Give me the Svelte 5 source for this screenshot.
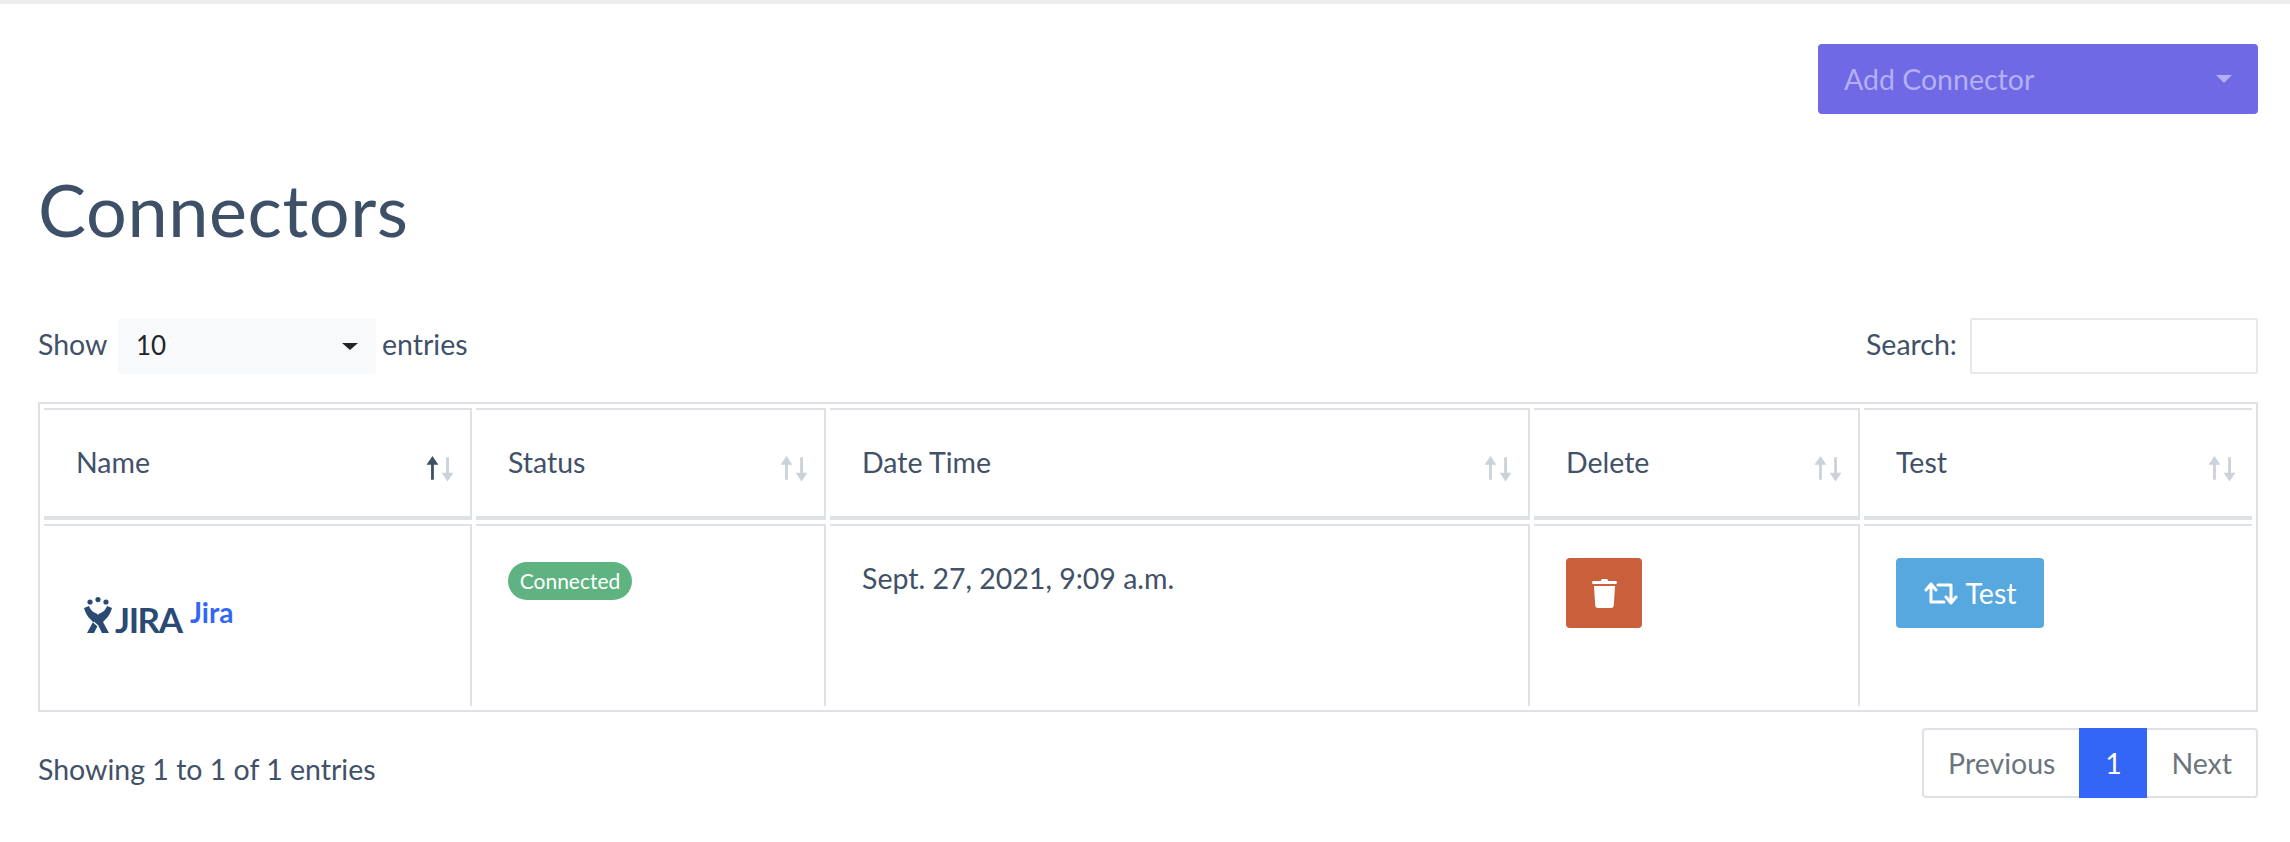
<script>
    const columns = [
        { label: "Name", width: 428 },
        { label: "Status", width: 350 },
        { label: "Date Time", width: 700 },
        { label: "Delete", width: 326 },
        { label: "Test", width: 388 },
    ];
</script>

<div class="page">
    <div class="toolbar">
        <button class="add-btn">
            <span>Add Connector</span>
            <i class="add-caret"></i>
        </button>
    </div>

    <h1>Connectors</h1>

    <div class="filters">
        <label class="length">
            <span class="label-text show">Show</span>
            <span class="select-wrap">
                <select>
                    <option>10</option>
                    <option>25</option>
                    <option>50</option>
                </select>
                <i class="select-caret"></i>
            </span>
            <span class="label-text">entries</span>
        </label>
        <label class="search">
            <span class="label-text">Search:</span>
            <input type="search" />
        </label>
    </div>

    <div class="table-box">
        <table>
            <colgroup>
                {#each columns as col}
                    <col style="width: {col.width}px" />
                {/each}
            </colgroup>
            <thead>
                <tr>
                    {#each columns as col, i}
                        <th>
                            {col.label}
                            <svg class="sort" viewBox="0 0 26 24" width="28" height="26">
                                <path class={i === 0 ? "on" : "off"} d="M6 0 L11.5 8 H7.3 V22 H4.7 V8 H0.5 Z" />
                                <path class="off" d="M20 23.5 L14.5 15.5 H18.7 V1 H21.3 V15.5 H25.5 Z" />
                            </svg>
                        </th>
                    {/each}
                </tr>
            </thead>
            <tbody>
                <tr>
                    <td class="logo-cell">
                        <div class="logo">
                            <svg viewBox="0 0 28 38" width="28" height="38">
                                <g fill="#2b4a73">
                                    <circle cx="6" cy="5" r="2.6" />
                                    <circle cx="14" cy="2.6" r="2.6" />
                                    <circle cx="22" cy="5" r="2.6" />
                                    <path d="M0 11 L5 9 C7 14 10 16 14 17 C18 16 21 14 23 9 L28 11 C26 18 23 21 19 25 L25 36 H18 L14 28 L10 36 H3 L9 25 C5 21 2 18 0 11 Z" />
                                </g>
                                <path d="M10 12 H18 L14 18 Z" fill="#fff" />
                                <path d="M9.5 25 L14 29" stroke="#fff" stroke-width="1.4" />
                            </svg>
                            <span class="jira-mark">JIRA</span>
                            <span class="logo-name">Jira</span>
                        </div>
                    </td>
                    <td><span class="badge">Connected</span></td>
                    <td>Sept. 27, 2021, 9:09 a.m.</td>
                    <td>
                        <button class="btn delete" aria-label="Delete">
                            <svg viewBox="0 0 25 29" width="25" height="29">
                                <path fill="#fff" d="M9 1.5 C9 .6 9.7 0 10.5 0 H14.5 C15.3 0 16 .6 16 1.5 V2 H23.5 C24.4 2 25 2.7 25 3.5 C25 4.3 24.4 5 23.5 5 H1.5 C.6 5 0 4.3 0 3.5 C0 2.7 .6 2 1.5 2 H9 Z M2 7 H23 L21.8 26.6 C21.7 28 20.6 29 19.2 29 H5.8 C4.4 29 3.3 28 3.2 26.6 Z" />
                            </svg>
                        </button>
                    </td>
                    <td>
                        <button class="btn test">
                            <svg viewBox="0 0 34 23" width="34" height="23" fill="none" stroke="#fff" stroke-width="3" stroke-linejoin="round" stroke-linecap="round">
                                <path d="M2 8 L7 2 L12 8 M7 2 V20 H20" />
                                <path d="M14 3 H27 V21 M22 15 L27 21 L32 15" />
                            </svg>
                            Test
                        </button>
                    </td>
                </tr>
            </tbody>
        </table>
    </div>

    <div class="footer">
        <div class="info">Showing 1 to 1 of 1 entries</div>
        <div class="pagination">
            <a href="#prev">Previous</a>
            <a href="#one" class="current">1</a>
            <a href="#next">Next</a>
        </div>
    </div>
</div>

<style>
    :global(body) {
        background: #fff;
    }
    .page {
        border-top: 4px solid #eeeeee;
        padding: 40px 32px 44px 38px;
        font-family: Lato, "Open Sans", sans-serif;
        font-size: 28.5px;
        color: #415168;
    }
    .toolbar {
        display: flex;
        justify-content: flex-end;
    }
    .add-btn {
        width: 440px;
        height: 70px;
        padding: 0 26px;
        display: flex;
        align-items: center;
        justify-content: space-between;
        background: #6f69e5;
        color: #b4b0f2;
        border: 0;
        border-radius: 4px;
        font: inherit;
    }
    .add-caret {
        border-top: 8px solid #b4b0f2;
        border-left: 8px solid transparent;
        border-right: 8px solid transparent;
    }
    h1 {
        margin: 48px 0 0;
        font-size: 72px;
        line-height: 94px;
        font-weight: 400;
        letter-spacing: 0.6px;
        color: #3e5068;
    }
    .filters {
        margin-top: 62px;
        display: flex;
        justify-content: space-between;
        align-items: center;
    }
    .length {
        display: flex;
        align-items: center;
        gap: 6px;
    }
    .search {
        display: flex;
        align-items: center;
        gap: 13px;
    }
    .label-text {
        padding-bottom: 5px;
    }
    .show {
        width: 74px;
    }
    .select-wrap {
        position: relative;
        display: block;
    }
    select {
        display: block;
        appearance: none;
        width: 258px;
        height: 56px;
        padding: 0 18px 2px;
        background: #f8f9fa;
        border: 0;
        border-radius: 3px;
        color: #212529;
        font: inherit;
        font-size: 26px;
    }
    .select-caret {
        position: absolute;
        right: 18px;
        top: 25px;
        border-top: 7px solid #212529;
        border-left: 8px solid transparent;
        border-right: 8px solid transparent;
    }
    input {
        width: 288px;
        height: 56px;
        box-sizing: border-box;
        border: 2px solid #e6e9ec;
        border-radius: 2px;
        background: #fff;
    }
    .table-box {
        margin-top: 28px;
        border: 2px solid #dee2e6;
    }
    table {
        width: 100%;
        table-layout: fixed;
        border-collapse: separate;
        border-spacing: 4px;
    }
    th,
    td {
        box-sizing: border-box;
        border-top: 2px solid #dee2e6;
        border-right: 2px solid #dee2e6;
        padding: 32px;
        text-align: left;
        vertical-align: top;
        font-weight: 400;
        line-height: 40px;
    }
    th:last-child,
    td:last-child {
        border-right: 0;
    }
    th {
        position: relative;
        height: 112px;
        border-bottom: 4px solid #dee2e6;
    }
    td {
        height: 182px;
    }
    .sort {
        position: absolute;
        right: 16px;
        top: 46px;
    }
    .on {
        fill: #3e5068;
    }
    .off {
        fill: #ccd2d9;
    }
    .logo-cell {
        padding: 71px 0 0 40px;
    }
    .logo {
        display: flex;
        align-items: flex-start;
    }
    .jira-mark {
        margin: 3px 0 0 3px;
        width: 67px;
        font-weight: 700;
        font-size: 35px;
        line-height: 38px;
        letter-spacing: -1.4px;
        color: #2b4a73;
    }
    .logo-name {
        margin-left: 8px;
        color: #3366f6;
        font-weight: 700;
        font-size: 28px;
        line-height: 30px;
    }
    .badge {
        display: inline-block;
        margin-top: 4px;
        width: 124px;
        height: 38px;
        border-radius: 19px;
        background: #5eb381;
        color: #fff;
        font-size: 21px;
        line-height: 38px;
        text-align: center;
        vertical-align: top;
    }
    .btn {
        display: flex;
        align-items: center;
        justify-content: center;
        gap: 8px;
        height: 70px;
        border: 0;
        border-radius: 4px;
        color: #fff;
        font: inherit;
        padding: 0;
    }
    .delete {
        width: 76px;
        background: #c95f3b;
    }
    .test {
        width: 148px;
        background: #57a8df;
    }
    .footer {
        margin-top: 16px;
        display: flex;
        justify-content: space-between;
        align-items: flex-start;
    }
    .info {
        padding-top: 24px;
    }
    .pagination {
        display: flex;
        height: 70px;
        box-sizing: border-box;
        border: 2px solid #dee2e6;
        border-radius: 4px;
    }
    .pagination a {
        display: flex;
        align-items: center;
        justify-content: center;
        text-decoration: none;
        color: #6c757d;
        padding: 0 24px;
    }
    .pagination a.current {
        margin: -2px 0;
        width: 68px;
        box-sizing: border-box;
        padding: 0;
        background: #3366f6;
        color: #fff;
    }
</style>
